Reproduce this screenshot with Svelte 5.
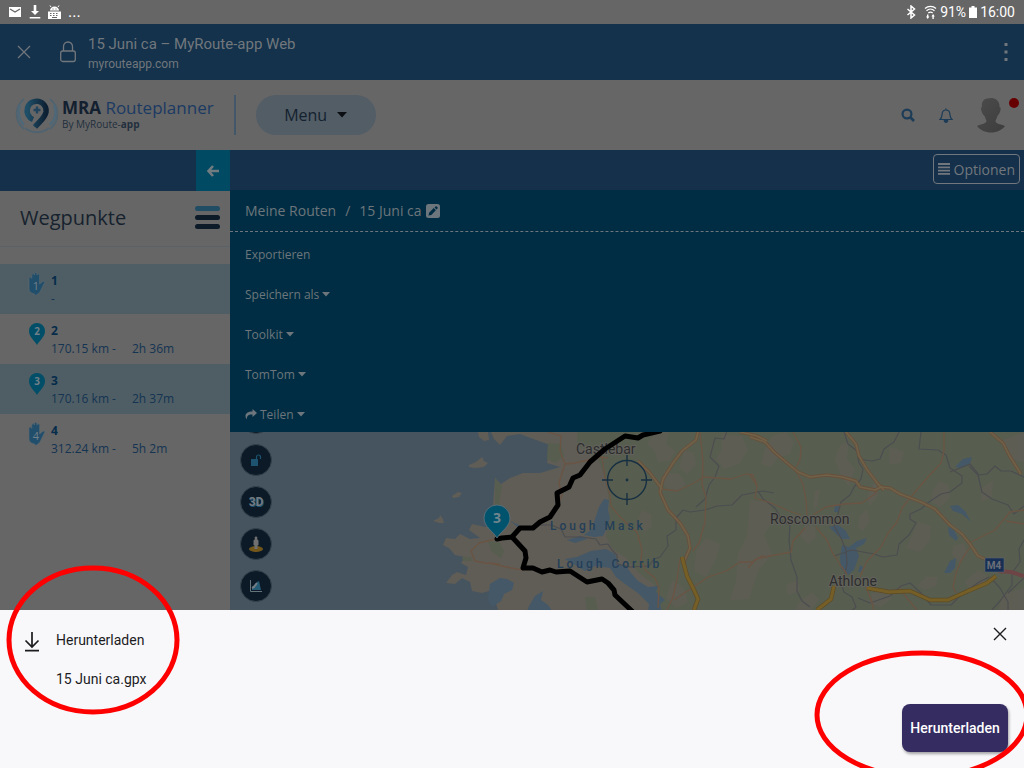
<script>
const waypoints = [
    { nr: 1, type: "hand", distance: "-", time: "" },
    { nr: 2, type: "pin", distance: "170.15 km -", time: "2h 36m" },
    { nr: 3, type: "pin", distance: "170.16 km -", time: "2h 37m" },
    { nr: 4, type: "hand", distance: "312.24 km -", time: "5h 2m" }
];

const actions = [
    { label: "Exportieren" },
    { label: "Speichern als", caret: true },
    { label: "Toolkit", caret: true },
    { label: "TomTom", caret: true },
    { label: "Teilen", caret: true, share: true }
];

const tools = ["Ebenen", "Sperren", "3D", "Street View", "Höhenprofil"];

// map shapes
const islands = [
    "M478 432l10 0 1 8-5 1-5-4z",
    "M469 465l7-3 6-5 2 4 4 2-4 4-9 1-6-1z",
    "M452 496l6-4 4 1-3 4-6 1z",
    "M433 521l6-3 1-3 3 4 1 4-5 0z"
];

const lakes = [
    "M604 499l5 1-1 10 2 8-3 10-4 8-9 1-10-2 8-6 3-10 4-12z",
    "M567 540l14-4 6 3-12 4z",
    "M565 559l12-2 14-6 15-2 9 5 3 9 8 3 5 7 7 8 10 6 10-1-2 6 9 8-5 4 2 8-8 6-6-5 1-9-6-6-5-5-13-9-9-7-6-9-15-2-10 5z",
    "M490 584l10-6 7 1 7 4-2 7-8 4-3 7-9 6-4-8z",
    "M529 606l6-10 8-5-2 9 7 5 5 7-26 0z",
    "M510 521l9 4 5 4-5-1z",
    "M829 527l9-2 8 6 4 8-8 0-7-6z",
    "M842 545l7 2 8-6 10-3-3 6-8 4 3 8-5 14-6 5-7-6-1-12z",
    "M835 506l4 0-1 6-4 0z",
    "M955 467l8-8 9-2-2 7-9 4z",
    "M950 506l8-1 7 6 6 11-9-8-9-3z",
    "M948 527l6 3 4 8-2 3-7-6z",
    "M950 561l6-3-1 10-5 5-6 0z",
    "M860 565l3 2-2 5-3 0z"
];

const patches = [
    "M655 432l14 0-3 12 9 7-5 10-12 1-4-12-7-6z",
    "M772 436l14-4 8 10-4 12-13 5-6 8-10-3 4-15z",
    "M722 434l20 2 6 14-9 14-15 5-8-10 6-10z",
    "M684 450l10 3 2 12-9 9-8-7z",
    "M664 472l16 2 6 11-10 7-12-6z",
    "M750 500l20 2 4 18-10 14 8 20-14 17-9 28-19 1 6-20 2-26 9-18z",
    "M706 538l14 6-4 15-10 18-12-6 2-20z",
    "M672 580l12 8 4 14-12 6-10-10z",
    "M840 445l9-4-2 18 8 10-6 18-8-11-6-17z",
    "M815 491l5-2-3 18-4 4z",
    "M871 488l6-9 1 16-8 11-3-8z",
    "M890 447l14 5-3 11-12 2z",
    "M939 481l9 4 2 12-9 10-10-5 2-12z",
    "M918 522l13 4-1 14-10 12-14-4z",
    "M953 546l11-3 4 11-8 9-8-8z",
    "M982 488l11-8-1 17-11 5z",
    "M1002 440l22-8 0 30-11-2z",
    "M978 570l9 5-3 12-12 4-8-9z",
    "M786 585l11-5 3 11-12 4z",
    "M798 603l14-11 7 8-8 10-15 0z",
    "M926 577l12 0-2 9-11 4-8-5z",
    "M1003 594l21-6 0 22-26 0z",
    "M872 593l15-4 5 10-12 8-12-4z",
    "M806 524l9 3 1 11-8 6-8-8z",
    "M860 516l7-7 3 12-7 10-5-4z",
    "M642 510l9 4 1 13-8 5-7-11z"
];

const greens = [
    "M495 478l7 8-3 16 4 10-8 1z",
    "M488 541l11 1 5 9-3 7-9-6z",
    "M548 443l13 1 3 12-9 7-8-4z",
    "M585 597l10 0 3 13-11 0z",
    "M462 557l8 0 3 4-10 0z"
];

const minorRoads = [
    "M548 432l13 4-1 15 5 13-3 9-3 10 3 12-4 9",
    "M565 464l10-1 13-3 14-3 6 1",
    "M602 457l3 21 5 17 1 11 9 11 12 11 5 4 5 18-1 9 4 11 10 8 4 10-1 20",
    "M490 563l12 3 14 3 10 1",
    "M500 538l-9 2-12 3-8 8 4 10 10 2 14 1",
    "M662 489l15 2 17-8 10-6 27 2 15-5 7 1 4 10",
    "M700 432l3 30-1 22 4 14-1 24-6 21-6 8",
    "M680 559l-3 20-4 18-6 13",
    "M674 600l18-12 16-11 18-6 14-9 12 0 12-7",
    "M748 568l8-9 14-3 11-2 10-2 2-11 12-13",
    "M793 432l8 15-1 13-5 9 8 15 3 16 1 16",
    "M750 475l7 11-2 12 16 5 18 8 12 4",
    "M813 515l13-8 18-3 18-1 13-9 5-8",
    "M816 527l11 13 5 12 9 14 6 8",
    "M860 577l7-16 14-14 7-14 9-11 5-14 8-10 17-20 14-15 3-12 0-19",
    "M971 542l24-12 15-18 14-2",
    "M1006 521l18 3",
    "M970 547l-9 14-5 12-3 14 3 6",
    "M866 587l5 12 3 11",
    "M899 588l8 10 10 12"
];

const majorRoads = [
    "M698 432l-2 8-14 11-9 12-10 16-3 13 8 18 12 13 8 13 2 12-7 16",
    "M638 461l12 12 12 16",
    "M740 432l17 4 10 5",
    "M750 437l15 5 9 10 12 10 12 10 12 5 17-2 15 2 14 4 4 6 15 3 6-3 9 1 10 6 21 8 14 7 15 16 12 9 8 10 8 12 14 6 11 11",
    "M846 432l10 12 3 12 9 15 10 13 6 6",
    "M990 432l13 11 6 12 12 19"
];

const motorways = [
    "M682 557l5 19 7 14 4 9-4 11",
    "M867 588l22 4 21-1 20 9 18 0 20-9 19-8 9-7",
    "M834 586l-3 13-14 11"
];

const borders = [
    "M540 525l11 0 10 4 4 8 17 0 14 2 4 6 8-1 4 6 5 5 0 9 12 3 20-1 5-7 6-2 8-11-1-10 9-6 0-12 7-8 7 2 15-2 12-4 15-1 10-10 21-4 11 2",
    "M696 507l9-8 4-14 6-8 4-11-9-9 5-19 9 1 3-8",
    "M844 432l4 12 9 7 2 12 4 6-2 10-7 8-4 8-9 7-3 12-4 12 7 12 5 12 1 14-2 9-4 11 3 8 8 5 4 10-9 8",
    "M858 459l14 2 8-2 4-10 10-7 5-10",
    "M921 432l-2 17 19 1 8 5 4 13 12 8 0 7-12 9-9 2-12 8-8 7-11 5 0 5 6 4-7 12-10 9-2 11-14 2-9-3-22-4-18 6",
    "M950 472l20-8 9 11 8-1 8-8 6 5 10 0 13 6",
    "M969 466l9 9 4 17 10 7 16 6 6 9 10-8",
    "M758 491l5 8 12 9 8 14 7 3-1 15 2 20 6 17 0 14 5 10 8 6",
    "M1024 540l-5 9 1 13-8 11 0 12-12 16-8 9",
    "M858 598l12 5 20-7 11-10 9-3 11 10 10 12 20 0 9-9 19-14 10-5",
    "M990 577l10 11 8 14 0 8",
    "M1008 593l16-15"
];
</script>

<div class="page">

<div class="status">
    <div class="status-group">
        <svg width="14" height="12" viewBox="0 0 14 12"><path fill="#fff" d="M1 1h12v10H1z"/><path d="M2 3l5 3 5-3" fill="none" stroke="#666" stroke-width="1.3"/></svg>
        <svg width="12" height="14" viewBox="0 0 12 14"><path fill="#fff" d="M4.700 0h2.600v6H10l-4 4-4-4h2.700zM.7 12h10.600v1.500H.7z"/></svg>
        <svg width="13" height="14" viewBox="0 0 13 14"><path fill="#fff" d="M2 5.600a4.500 4 0 0 1 9 0zM0 6.400h13V14H0z"/><path d="M3 2L2 .5M10 2l1-1.500" stroke="#fff"/><path d="M4.500 4h1M7.500 4h1M2 8.500h1.500M5 8.500h1.500M8 8.500h1.500M2 10.500h1.500M5 10.500h1.500M8 10.500h1.500M4 12.500h5" stroke="#666"/></svg>
        <span class="dots">...</span>
    </div>
    <div class="status-group right">
        <svg width="10" height="14" viewBox="0 0 10 14"><path d="M1.500 4l7 6L5 13V1l3.500 3-7 6" fill="none" stroke="#fff" stroke-width="1.500"/></svg>
        <svg width="13" height="14" viewBox="0 0 13 14"><path d="M1 3.500a8 8 0 0 1 11 0M2.500 5.700a6 6 0 0 1 8 0M4.300 8a3.400 3.400 0 0 1 4.400 0" fill="none" stroke="#fff" stroke-width="1.200"/><path fill="#fff" d="M3 9.500h1.400v2h1L3.700 14 2 11.500h1zM8.400 14v-2.500h-1L9.100 9l1.700 2.500h-1V14z"/></svg>
        <span class="status-text">91%</span>
        <svg width="8" height="12" viewBox="0 0 8 12"><path fill="#fff" d="M2.500 0h3v1.500H8V12H0V1.500h2.500z"/></svg>
        <span class="status-text">16:00</span>
    </div>
</div>

<div class="appbar">
    <button class="icon-btn" aria-label="Schließen">
        <svg width="14" height="14" viewBox="0 0 14 14"><path d="M1 1l12 12M13 1L1 13" stroke="#71777d" stroke-width="1.200"/></svg>
    </button>
    <svg class="lock" width="16" height="22" viewBox="0 0 16 22"><rect x=".7" y="10" width="14.600" height="10.500" rx="2" fill="none" stroke="#71777d" stroke-width="1.300"/><path d="M3.500 10V5.500a4.500 4.500 0 0 1 9 0V10" fill="none" stroke="#71777d" stroke-width="1.300"/></svg>
    <div class="site">
        <div class="site-title">15 Juni ca – MyRoute-app Web</div>
        <div class="site-host">myrouteapp.com</div>
    </div>
    <button class="icon-btn more" aria-label="Mehr">
        <svg width="4" height="18" viewBox="0 0 4 18"><path fill="#71777d" d="M.5 0h3v3h-3zM.5 7.500h3v3h-3zM.5 15h3v3h-3z"/></svg>
    </button>
</div>

<header>
    <a class="logo" href="/" aria-label="MRA Routeplanner">
        <svg width="44" height="40" viewBox="0 0 44 40">
            <defs><linearGradient id="drop" x1="0" x2="1"><stop offset="0" stop-color="#1f4f68"/><stop offset="1" stop-color="#0d2033"/></linearGradient></defs>
            <path d="M9 4A19 19 0 0 0 9 34M35 4a19 19 0 0 1 0 30M10 33a19 19 0 0 0 24 0" fill="none" stroke="#4f6370" stroke-width="1.800"/>
            <path d="M5 10a18 18 0 0 0 4 20M39 10a18 18 0 0 1-4 20" fill="none" stroke="#4f6878" stroke-width="2.500"/>
            <path d="M18 24.500A9.500 9.500 0 1 1 31 17c-1 6-6 9-11 15" fill="none" stroke="url(#drop)" stroke-width="5.500"/>
            <path d="M22 11.500v7M18.500 15h7" stroke="#20445e" stroke-width="2.400"/>
        </svg>
        <span class="brand">
            <span class="brand-name"><b>MRA</b> Routeplanner</span>
            <span class="brand-sub">By MyRoute-<b>app</b></span>
        </span>
    </a>
    <button class="menu">Menu
        <svg width="10" height="6" viewBox="0 0 10 6"><path d="M0 0h10L5 5.500z" fill="#0b0f13"/></svg>
    </button>
    <div class="header-icons">
        <button class="icon-btn" aria-label="Suche">
            <svg width="14" height="14" viewBox="0 0 14 14"><circle cx="6" cy="6" r="4.400" fill="none" stroke="#1c3c57" stroke-width="2.200"/><path d="M9 9l4 4" stroke="#1c3c57" stroke-width="2.600"/></svg>
        </button>
        <button class="icon-btn" aria-label="Benachrichtigungen">
            <svg width="14" height="15" viewBox="0 0 14 15"><path d="M1 11.500c2-1.800 2-4 2.200-6C3.500 3 5 2 7 2s3.500 1 3.800 3.500c.2 2 .2 4.200 2.200 6z" fill="none" stroke="#1c3c57" stroke-width="1.200"/><path d="M7 .3V2M5 12.500a2 2 0 0 0 4 0z" fill="#1c3c57" stroke="#1c3c57"/></svg>
        </button>
        <button class="icon-btn avatar" aria-label="Profil">
            <svg width="28" height="36" viewBox="0 0 28 36"><defs><linearGradient id="grey" x1="0" x2="1" y2="1"><stop offset="0" stop-color="#4b4b4b"/><stop offset="1" stop-color="#3d3d3d"/></linearGradient></defs><path fill="url(#grey)" d="M5 10C4 4 8 1 11 1.500 14 0 23 1 22.500 10c1.500 0 1.500 3 0 6-.8 1.400-1.500 2-2 3l-2 5c0 3 5 3 9.500 5-3 4-8 6.500-14 6.500S3 33 0 29c4-2 9-2 9.500-5l-2-5c-1-1-2-2-2.500-3.500C3.500 12 3.800 10 5 10z"/></svg>
            <span class="alert"></span>
        </button>
    </div>
</header>

<div class="workspace">
    <aside>
        <div class="side-bar">
            <button class="back" aria-label="Zurück">
                <svg width="12" height="12" viewBox="0 0 12 12"><path d="M6 1L1.500 6 6 11M2 6h10" fill="none" stroke="#717c80" stroke-width="2.600"/></svg>
            </button>
        </div>
        <div class="side-head">
            <h2>Wegpunkte</h2>
            <button class="burger" aria-label="Liste"><i></i><i></i><i></i></button>
        </div>
        <ul>
            {#each waypoints as wp}
            <li>
                {#if wp.type == "pin"}
                <svg width="18" height="24" viewBox="0 0 18 24"><path fill="#004e67" d="M9 23C7 19 1 15 1 9a8 8 0 0 1 16 0c0 6-6 10-8 14z"/><text x="9" y="13" class="nr bold">{wp.nr}</text></svg>
                {:else}
                <svg width="18" height="24" viewBox="0 0 18 24"><path fill="#214e6b" stroke="#5e6a70" stroke-width=".6" d="M1 6.500Q1 5 2.300 5T3.800 6.500V3.200q0-1.600 1.300-1.600T6.400 3V2q0-1.600 1.300-1.600T9 2v1.200q0-1.400 1.300-1.400t1.300 1.600V12l3.400-2.800q2.200-.6 1.800.9L13 18q-1 3-3.500 4l-1.500 1.500L6.500 22Q1 21 1 17z"/><text x="8" y="18" class="nr">{wp.nr}</text></svg>
                {/if}
                <div class="wp">
                    <strong>{wp.nr}</strong>
                    <div class="wp-info"><span>{wp.distance}</span><span>{wp.time}</span></div>
                </div>
            </li>
            {/each}
        </ul>
    </aside>

    <main>
        <div class="toolbar">
            <button class="options">
                <svg width="12" height="12" viewBox="0 0 12 12"><path d="M0 1h12M0 4.300h12M0 7.600h12M0 10.900h12" stroke="#71777d" stroke-width="1.800"/></svg>
                Optionen
            </button>
        </div>
        <nav>
            <div class="crumbs">
                <a href="#routen">Meine Routen</a>
                <span class="slash">/</span>
                <span>15 Juni ca</span>
                <button class="icon-btn" aria-label="Umbenennen">
                    <svg width="14" height="14" viewBox="0 0 14 14"><rect width="14" height="14" rx="2.500" fill="#6c767c"/><path d="M2.500 11.500l.6-2.800 4.600-4.600 2.200 2.200-4.600 4.600zM8.500 3.400l1-1q.7-.4 1.300.2l.7.700q.5.600 0 1.200l-1 1z" fill="#002d43"/></svg>
                </button>
            </div>
            <div class="actions">
                {#each actions as action}
                <button class="action">
                    {#if action.share}
                    <svg width="12" height="11" viewBox="0 0 12 11"><path fill="#6c767c" d="M7.500 0L12 4 7.500 8V5.600C4 5.400 2 6.500 1.600 10.500-1 6 1 2.500 7.500 2.500z"/></svg>
                    {/if}
                    {action.label}
                    {#if action.caret}
                    <svg width="8" height="5" viewBox="0 0 8 5"><path fill="#6c767c" d="M0 0h8L4 4.500z"/></svg>
                    {/if}
                </button>
                {/each}
            </div>
        </nav>

        <div class="map">
            <svg class="chart" viewBox="230 432 794 178" preserveAspectRatio="xMinYMin slice">
                <rect x="230" y="432" width="794" height="178" fill="#46545f"/>
                <g fill="#5f5d56">
                    <path d="M491 432H1024V610H498L495 600 500 592 493 590 482 593 472 591 470 582 462 578 455 584 446 583 452 575 457 572 466 575 468 567 461 563 465 557 455 555 449 548 443 545 446 538 455 539 460 534 470 539 480 538 469 530 472 524 485 527 494 526 493 505 495 478 501 484 510 478 523 473 540 473 560 467 547 463 550 445 536 440 520 434 507 436 500 445 494 439z"/>
                    {#each islands as d}<path {d}/>{/each}
                </g>
                <path fill="#575e4f" d="M577 432H1024V610H648L655 585 640 574 626 558 612 548 606 536 610 520 609 500 606 480 598 458 577 445z"/>
                <g fill="#575e4f">{#each greens as d}<path {d}/>{/each}</g>
                <g fill="#5f5d56" opacity=".8">{#each patches as d}<path {d}/>{/each}</g>
                <g fill="#455868">{#each lakes as d}<path {d}/>{/each}</g>
                <g class="line border">{#each borders as d}<path {d}/>{/each}</g>
                <g class="line minor">{#each minorRoads as d}<path {d}/>{/each}</g>
                <g class="line casing">{#each majorRoads as d}<path {d}/>{/each}</g>
                <g class="line major">{#each majorRoads as d}<path {d}/>{/each}</g>
                <g class="line casing wide">{#each motorways as d}<path {d}/>{/each}</g>
                <g class="line motorway">{#each motorways as d}<path {d}/>{/each}</g>
                <path class="line pink" d="M998 571l13 1 13 4"/>

                <text class="town" x="576" y="454">Castlebar</text>
                <text class="town" x="770" y="524">Roscommon</text>
                <text class="town" x="829" y="586">Athlone</text>
                <text class="water" x="550" y="530">Lough Mask</text>
                <text class="water" x="557" y="568">Lough Corrib</text>
                <rect x="985" y="558" width="19" height="14" fill="#182f55" stroke="#5a646e" stroke-width=".6"/>
                <text class="shield" x="994" y="569">M4</text>

                <path class="line route" d="M497 539L502 538 512 537 520 528 533 528 540 522 550 517 558 505 557 493 569 487 573 478 580 475 590 462 605 449 625 436 638 438 643 435 660 431"/>
                <path class="line route" d="M512 537L525 551 526 558 523 568 533 568 542 572 550 570 556 572 570 571 587 582 602 579 608 583 614 590 615 595 632 611"/>

                <g fill="none" stroke="#172f42" stroke-width="1.400">
                    <circle cx="627" cy="480" r="19.500"/>
                    <path d="M627 455v11M627 493v12M602 480h11M641 480h11"/>
                </g>
                <circle cx="627" cy="480" r="1.400" fill="#172f42"/>

                <path fill="#00536d" stroke="#64747c" stroke-width=".8" d="M497 538C493 531 484 527 484 518a13 13 0 0 1 26 0c0 9-9 13-13 20z"/>
                <text class="pin-nr" x="497" y="523">3</text>
            </svg>

            <div class="tools">
                {#each tools as tool}
                <button class="tool" aria-label={tool}>
                    {#if tool == "Sperren"}
                    <svg width="14" height="14" viewBox="0 0 14 14"><path fill="#1d536f" d="M2 6h7v7H2z"/><path d="M7.500 6V4a2 2 0 0 1 4 0v2" fill="none" stroke="#1d536f" stroke-width="1.200"/></svg>
                    {:else if tool == "3D"}
                    <span class="three">3D</span>
                    {:else if tool == "Street View"}
                    <svg width="16" height="18" viewBox="0 0 16 18"><ellipse cx="8" cy="14" rx="7" ry="3" fill="#73571a"/><path fill="#707070" d="M6.500 2.500a1.700 1.700 0 0 1 3 0L9 4l1.500 1.500V10l-1 .5V14h-3v-3.500l-1-.5V5.500L7 4z"/></svg>
                    {:else if tool == "Höhenprofil"}
                    <svg width="14" height="14" viewBox="0 0 14 14"><path fill="#265b76" d="M3 11V8l5-5 2-1 2 9z"/><path d="M1.500 1v11.500H13" fill="none" stroke="#65737b"/><path d="M3 9l2-1 3-4" fill="none" stroke="#737d82" stroke-width="2"/></svg>
                    {/if}
                </button>
                {/each}
            </div>
        </div>
    </main>
</div>

<section class="sheet">
    <svg class="down" width="16" height="20" viewBox="0 0 16 20"><path d="M8 0v14.500M1.500 8.500L8 15l6.500-6.500M1 18.700h14" fill="none" stroke="#1c1c1e" stroke-width="1.700"/></svg>
    <div class="file">
        <div>Herunterladen</div>
        <div>15 Juni ca.gpx</div>
    </div>
    <div class="sheet-side">
        <button class="icon-btn" aria-label="Abbrechen">
            <svg width="14" height="14" viewBox="0 0 14 14"><path d="M1 1l12 12M13 1L1 13" stroke="#1c1c1e" stroke-width="1.400"/></svg>
        </button>
        <button class="download">Herunterladen</button>
    </div>
    <svg class="mark mark-left" width="174" height="150"><ellipse cx="87" cy="75" rx="84" ry="72"/></svg>
    <svg class="mark mark-right" width="216" height="130"><ellipse cx="108" cy="65" rx="105" ry="62"/></svg>
</section>

</div>

<style>
:global(body){
margin:0;
background:#666;
}

.page{
display:flex;
flex-direction:column;
height:100vh;
overflow:hidden;
font-family:"Open Sans", sans-serif;
}

button{
font-family:inherit;
padding:0;
border:none;
background:none;
cursor:pointer;
}

a{
color:inherit;
text-decoration:none;
}

svg{
display:block;
flex:none;
}

.icon-btn{
display:flex;
align-items:center;
justify-content:center;
}

.status{
display:flex;
justify-content:space-between;
align-items:center;
height:24px;
padding:0 9px 0 8px;
background:#666;
color:#fff;
font-family:Roboto, sans-serif;
}

.status-group{
display:flex;
align-items:center;
gap:7px;
}

.status-group.right{
gap:3px;
}

.status-group.right svg:first-child{
margin-right:5px;
}

.status-text{
font-size:14px;
line-height:24px;
}

.dots{
font-size:16px;
line-height:20px;
}

.appbar{
display:flex;
align-items:center;
height:56px;
padding:0 16px 0 17px;
background:#14324b;
color:#71777d;
font-family:Roboto, sans-serif;
}

.lock{
margin:0 12px 0 29px;
}

.site{
padding-top:4px;
}

.site-title{
font-size:15px;
line-height:20px;
}

.site-host{
font-size:12px;
line-height:20px;
}

.more{
margin-left:auto;
}

header{
display:flex;
align-items:center;
height:70px;
padding:0 5px 0 15px;
background:#666;
}

.logo{
display:flex;
align-items:center;
gap:3px;
padding-right:20px;
border-right:2px solid #43576a;
height:40px;
color:#1b3a63;
}

.brand{
display:flex;
flex-direction:column;
}

.brand-name{
font-size:17px;
line-height:18px;
font-weight:500;
}

.brand-name b{
color:#13202f;
}

.brand-sub{
font-size:10px;
line-height:14px;
color:#222f3d;
}

.menu{
display:flex;
align-items:center;
justify-content:center;
gap:10px;
width:120px;
height:40px;
margin-left:20px;
border-radius:20px;
background:#525d66;
color:#14222f;
font-size:16px;
}

.header-icons{
display:flex;
align-items:center;
gap:24px;
margin-left:auto;
}

.avatar{
align-items:flex-start;
gap:4px;
}

.alert{
width:10px;
height:10px;
margin-top:1px;
border-radius:50%;
background:#660000;
}

.workspace{
flex:1;
min-height:0;
display:flex;
}

aside{
width:230px;
flex:none;
background:#666;
}

.side-bar{
display:flex;
justify-content:flex-end;
height:41px;
background:#15304a;
}

.back{
display:flex;
align-items:center;
justify-content:center;
width:34px;
background:#004a63;
}

.side-head{
display:flex;
align-items:center;
justify-content:space-between;
height:56px;
padding:0 10px 2px 20px;
border-bottom:1px solid #5a6268;
box-sizing:border-box;
}

h2{
margin:0;
font-size:20px;
line-height:28px;
font-weight:400;
color:#16222e;
}

.burger{
display:flex;
flex-direction:column;
gap:4px;
}

.burger i{
width:25px;
height:5px;
border-radius:3px;
background:#0d1a27;
}

.burger i:first-child{
background:#204d64;
}

ul{
list-style:none;
margin:0;
padding:17px 0 0;
}

li{
display:flex;
gap:5px;
height:50px;
padding:8px 0 0 28px;
box-sizing:border-box;
}

li:nth-child(odd){
background:#4f5e65;
}

.nr{
font-size:11px;
fill:#707f88;
text-anchor:middle;
}

.bold{
font-size:10px;
font-weight:700;
}

.wp{
font-size:12px;
line-height:18px;
color:#143452;
}

.wp strong{
display:block;
line-height:18px;
color:#052c4b;
}

.wp-info{
display:grid;
grid-template-columns:81px auto;
}

main{
flex:1;
min-width:0;
display:flex;
flex-direction:column;
}

.toolbar{
display:flex;
justify-content:flex-end;
align-items:center;
height:40px;
padding:0 4px 2px 0;
box-sizing:border-box;
background:#15304a;
}

.options{
display:flex;
align-items:center;
gap:4px;
height:30px;
padding:0 4px;
border:1px solid #71777d;
border-radius:4px;
color:#71777d;
font-size:14px;
}

nav{
background:#002d43;
color:#6c767c;
}

.crumbs{
display:flex;
align-items:center;
height:42px;
padding-left:15px;
border-bottom:1px dashed #6c767c;
box-sizing:border-box;
font-size:14px;
line-height:20px;
}

.slash{
margin:0 9px;
}

.crumbs button{
margin-left:4px;
}

.actions{
display:flex;
flex-direction:column;
align-items:flex-start;
padding-left:15px;
}

.action{
display:flex;
align-items:center;
gap:3px;
height:40px;
padding-top:4px;
color:inherit;
font-size:12px;
}

.map{
position:relative;
flex:1;
min-height:0;
overflow:hidden;
background:#46545f;
}

.chart{
width:100%;
height:100%;
}

.line{
fill:none;
stroke-linejoin:round;
}

.border{
stroke:#4c4d50;
stroke-width:1.2;
}

.minor{
stroke:#6b5443;
stroke-width:1.3;
}

.casing{
stroke:#68503c;
stroke-width:3.4;
}

.major{
stroke:#706149;
stroke-width:1.6;
}

.wide{
stroke:#5d4b27;
stroke-width:4.4;
}

.motorway{
stroke:#765f27;
stroke-width:3;
}

.pink{
stroke:#6e4546;
stroke-width:4;
}

.route{
stroke:#000;
stroke-width:5;
stroke-linecap:round;
}

.town{
font-family:Roboto, sans-serif;
font-size:14px;
fill:#2d2d2e;
stroke:#62615c;
stroke-width:2;
paint-order:stroke;
}

.water{
font-family:Roboto, sans-serif;
font-size:12px;
font-weight:500;
letter-spacing:3px;
fill:#243f58;
}

.shield{
font-family:Roboto, sans-serif;
font-size:10px;
font-weight:700;
fill:#6b7078;
text-anchor:middle;
}

.pin-nr{
font-size:14px;
font-weight:700;
fill:#71858e;
text-anchor:middle;
}

/* first tool is cut off by the open menu */
.tools{
position:absolute;
top:-30px;
left:10px;
display:flex;
flex-direction:column;
gap:10px;
}

.tool{
display:flex;
align-items:center;
justify-content:center;
width:32px;
height:32px;
box-sizing:border-box;
border:1px solid #34424c;
border-radius:50%;
background:#0b1a26;
}

.three{
font-family:Roboto, sans-serif;
font-size:12px;
font-weight:700;
color:#737a80;
text-shadow:1px 1px 0 #1d5270;
}

.sheet{
position:relative;
display:flex;
height:158px;
padding:16px;
box-sizing:border-box;
background:#f8f8fa;
color:#1c1c1e;
font-family:Roboto, sans-serif;
}

.down{
margin:6px 16px 0 8px;
}

.file{
display:flex;
flex-direction:column;
gap:15px;
padding-top:2px;
font-size:14px;
line-height:24px;
}

.sheet-side{
display:flex;
flex-direction:column;
justify-content:space-between;
align-items:flex-end;
margin-left:auto;
}

.sheet-side .icon-btn{
margin:1px;
}

.download{
width:106px;
height:48px;
border-radius:8px;
background:#352d62;
color:#fff;
font-size:14px;
font-weight:500;
box-shadow:1px 2px 3px rgba(0,0,0,0.35);
}

.mark{
position:absolute;
fill:none;
stroke:#f00;
stroke-width:5;
pointer-events:none;
}

.mark-left{
top:-45px;
left:6px;
}

.mark-right{
right:-6px;
bottom:-12px;
}
</style>
